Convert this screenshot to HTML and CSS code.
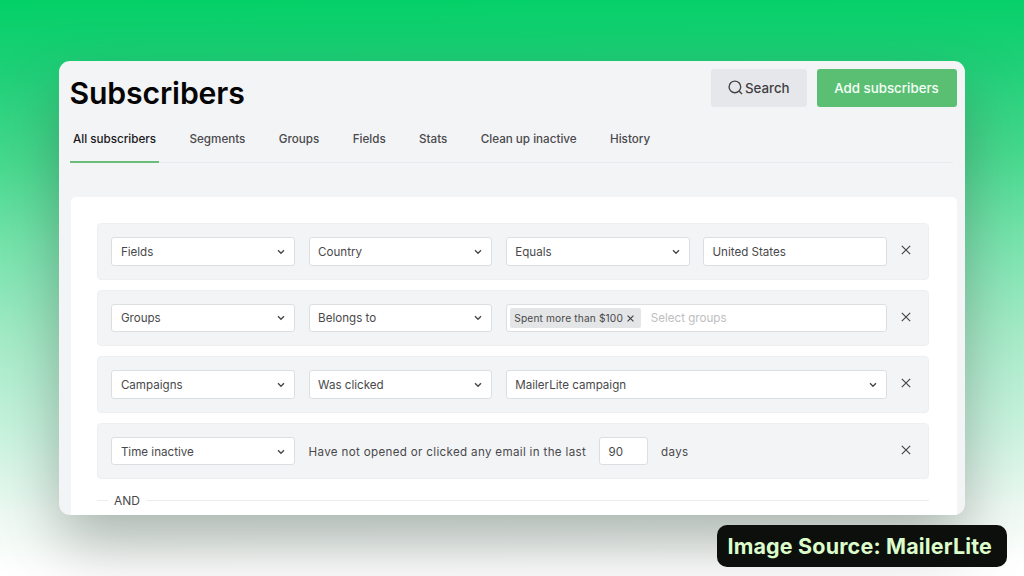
FILE: index.html
```html
<!DOCTYPE html>
<html lang="en">
<head>
<meta charset="utf-8">
<title>Subscribers</title>
<link rel="stylesheet" href="styles.css">
</head>
<body>
<svg class="defs" aria-hidden="true">
  <symbol id="chevron" viewBox="0 0 8 6"><path d="M1 1.2 4 4.3 7 1.2"/></symbol>
  <symbol id="close" viewBox="0 0 10 10"><path d="M.8.8 9.2 9.2M9.2.8.8 9.2"/></symbol>
</svg>
<main class="panel">
  <header class="header">
    <h1 class="title">Subscribers</h1>
    <div class="actions">
      <button class="btn btn-search"><svg class="search-icon" viewBox="0 0 15 15"><circle cx="6.9" cy="6.9" r="5.8"/><path d="m11 11 3 3"/></svg><span>Search</span></button>
      <button class="btn btn-add"><span>Add subscribers</span></button>
    </div>
  </header>
  <nav class="tabs">
    <a class="tab active">All subscribers</a>
    <a class="tab">Segments</a>
    <a class="tab">Groups</a>
    <a class="tab">Fields</a>
    <a class="tab">Stats</a>
    <a class="tab">Clean up inactive</a>
    <a class="tab">History</a>
  </nav>
  <section class="card">
    <div class="rule">
      <div class="field"><span>Fields</span><svg class="chevron"><use href="#chevron"/></svg></div>
      <div class="field"><span>Country</span><svg class="chevron"><use href="#chevron"/></svg></div>
      <div class="field"><span>Equals</span><svg class="chevron"><use href="#chevron"/></svg></div>
      <div class="field"><span>United States</span></div>
      <svg class="close"><use href="#close"/></svg>
    </div>
    <div class="rule">
      <div class="field"><span>Groups</span><svg class="chevron"><use href="#chevron"/></svg></div>
      <div class="field"><span>Belongs to</span><svg class="chevron"><use href="#chevron"/></svg></div>
      <div class="field wide tags"><span class="tag"><span>Spent more than $100</span><svg class="tag-close"><use href="#close"/></svg></span><span class="placeholder">Select groups</span></div>
      <svg class="close"><use href="#close"/></svg>
    </div>
    <div class="rule">
      <div class="field"><span>Campaigns</span><svg class="chevron"><use href="#chevron"/></svg></div>
      <div class="field"><span>Was clicked</span><svg class="chevron"><use href="#chevron"/></svg></div>
      <div class="field wide"><span>MailerLite campaign</span><svg class="chevron"><use href="#chevron"/></svg></div>
      <svg class="close"><use href="#close"/></svg>
    </div>
    <div class="rule">
      <div class="field"><span>Time inactive</span><svg class="chevron"><use href="#chevron"/></svg></div>
      <div class="sentence"><span class="phrase">Have not opened or clicked any email in the last</span><div class="field days">90</div><span>days</span></div>
      <svg class="close"><use href="#close"/></svg>
    </div>
    <div class="divider"><span>AND</span></div>
  </section>
</main>
<div class="caption"><span>Image Source: MailerLite</span></div>
</body>
</html>
```
FILE: styles.css
```css
* { box-sizing: border-box; }
body {
  margin: 0;
  width: 1024px;
  height: 576px;
  overflow: hidden;
  padding: 60.5px 59px 0;
  font-family: Inter, "Liberation Sans", sans-serif;
  color: #49494b;
  background: linear-gradient(179.5deg, #03d067 0%, #1ed077 12%, #47da8e 28%, #76e4ac 42%, #a4ecc7 58%, #cbf4e0 75%, #eefaf3 88%, #fff 98%);
}
.defs { position: absolute; width: 0; height: 0; }
svg { flex: none; fill: none; stroke: #444447; }
.panel {
  height: 454px;
  padding: 8px 8.5px 0 11px;
  overflow: hidden;
  border-radius: 11px;
  background: #f3f4f6;
  box-shadow: 0 28px 62px rgba(60, 65, 62, .38);
}
.header { display: flex; justify-content: space-between; height: 54px; }
.title { margin: 4px 0 0 -.5px; font-size: 30.2px; line-height: 40px; font-weight: 600; color: #050505; letter-spacing: -.13px; }
.actions { display: flex; gap: 10px; }
.btn {
  display: flex; align-items: center; justify-content: center;
  height: 38.5px; padding: 0; border: 0; border-radius: 3px;
  font: 500 13.3px/18px Inter, sans-serif;
}
.btn-search { width: 95.5px; gap: 2px; background: #e6e7ea; color: #3f3f42; }
.btn-add { width: 140px; background: #5bbf73; color: #f5fff7; }
.search-icon { width: 15px; height: 15px; stroke-width: 1.4; }
.tabs { display: flex; gap: 27.4px; height: 40px; margin-right: 4px; border-bottom: 1px solid #e9eaed; }
.tab { height: 40px; padding: 9.5px 3px 0; font-size: 11.65px; line-height: 15px; font-weight: 500; color: #4a4a4d; white-space: nowrap; }
.active { border-bottom: 2px solid #6abd79; color: #19191b; }
.card { height: 330px; margin: 34px 0 0 .5px; padding: 26.5px 27.5px 0 26.5px; border-radius: 5px; background: #fff; }
.rule {
  display: grid; grid-template-columns: repeat(4, 183.8px) 10px; column-gap: 13.4px; align-items: center;
  height: 56.6px; margin-bottom: 10px; padding: 0 13.4px;
  border: 1px solid #eeeff1; border-radius: 4px; background: #f3f4f6;
  font-size: 11.6px; line-height: 16px;
}
.field {
  display: flex; align-items: center; justify-content: space-between;
  height: 28.5px; padding: 1px 9px 0 8.5px; border: 1px solid #dcdfe1; border-radius: 3px; background: #fff;
}
.wide { grid-column: span 2; }
.chevron { width: 8px; height: 6px; stroke-width: 1.3; }
.close { width: 10px; height: 10px; margin: 0 0 2px 1px; stroke-width: 1.15; }
.tags { justify-content: flex-start; padding: 0 0 0 3px; }
.tag { display: flex; align-items: center; gap: 4px; width: 131px; height: 20px; padding: 1px 0 0 4.5px; border-radius: 2px; background: #e4e5e7; font-size: 10.2px; letter-spacing: .14px; white-space: nowrap; }
.tag-close { width: 7px; height: 7px; stroke-width: 1.7; }
.placeholder { margin-left: 10px; padding-top: 1px; color: #bdbec0; }
.sentence { grid-column: span 3; display: flex; align-items: center; gap: 13px; letter-spacing: .33px; white-space: nowrap; }
.sentence > span { padding-top: 1px; }
.days { width: 49px; letter-spacing: .1px; }
.divider { display: flex; align-items: center; gap: 6px; margin-top: 13.5px; font-size: 12px; line-height: 16px; }
.divider::before, .divider::after { content: ""; height: 1px; background: #ebecee; }
.divider::before { width: 11px; }
.divider::after { flex: 1; }
.caption {
  position: absolute; left: 717px; top: 525px; width: 290px; height: 42px;
  display: flex; align-items: center; padding-left: 10.5px;
  border-radius: 10px; background: #0d0f0d; color: #dcfccb;
  font-size: 21.5px; line-height: 26px; font-weight: 700; letter-spacing: .16px; white-space: nowrap;
}
```
